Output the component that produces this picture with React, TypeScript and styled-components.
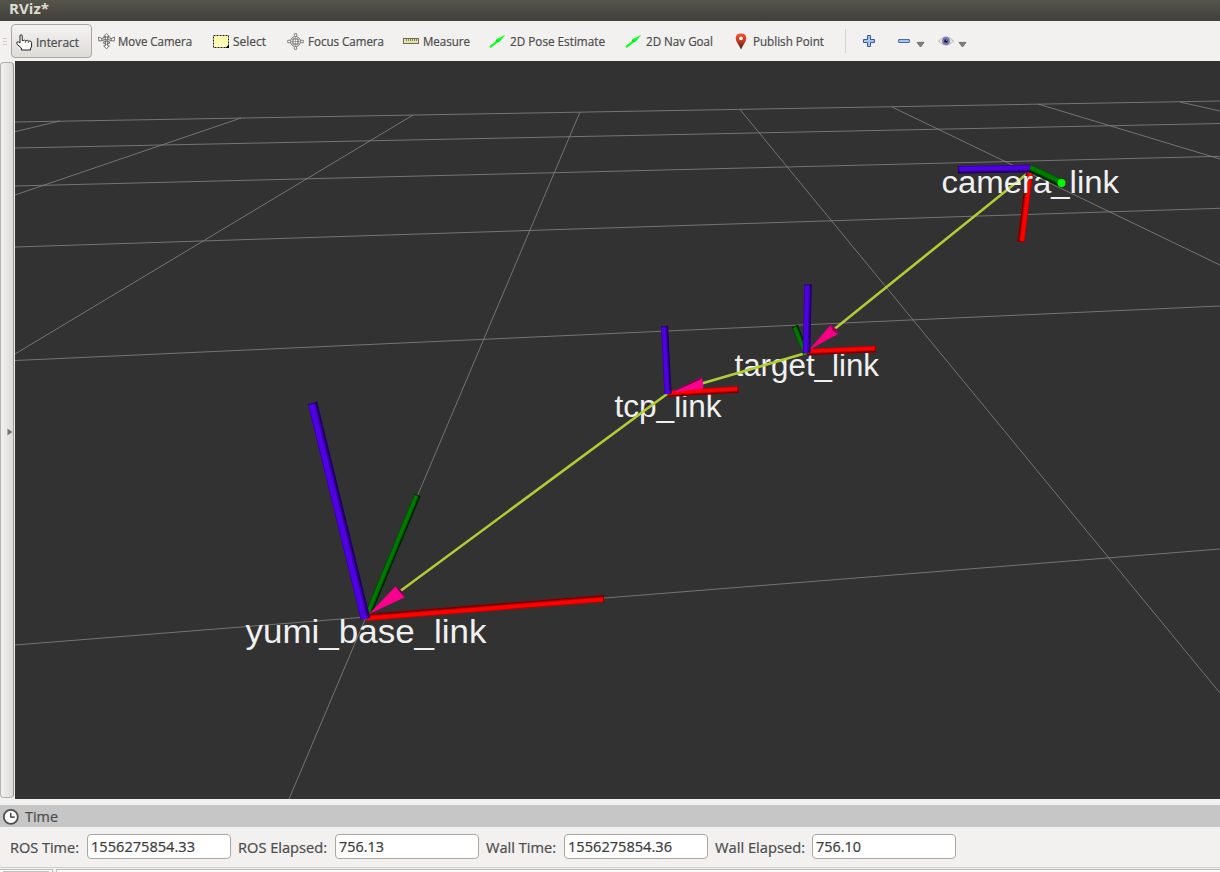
import React from "react";
import styled, { createGlobalStyle } from "styled-components";

const Global = createGlobalStyle`
  * { box-sizing: border-box; }
  body { margin: 0; background: #f2f1f0; }
`;

const Window = styled.div`
  width: 1220px;
  height: 872px;
  display: flex;
  flex-direction: column;
  overflow: hidden;
  background: #f2f1f0;
  color: #4c4c4c;
  font-family: "Open Sans", "Noto Sans", sans-serif;
`;

const TitleBar = styled.header`
  height: 21px;
  flex: none;
  padding-left: 9px;
  background: linear-gradient(#56554c, #403f3a);
  color: #dfdbd2;
`;

const Toolbar = styled.nav`
  height: 40px;
  flex: none;
  display: flex;
  align-items: flex-start;
  padding: 3px 0 0 3px;
`;

const Handle = styled.div`
  width: 4px;
  height: 8px;
  margin: 14px 4px 0 0;
  background: repeating-linear-gradient(#cfcdca 0 1px, transparent 1px 3px);
`;

const Tool = styled.button<{ $width: number; $lead: number; $gap: number; $active?: boolean }>`
  width: ${(p) => p.$width}px;
  height: 34px;
  flex: none;
  display: flex;
  align-items: center;
  gap: ${(p) => p.$gap}px;
  padding: ${(p) => (p.$active ? 2 : 0)}px 0 0 ${(p) => p.$lead}px;
  border: 1px solid ${(p) => (p.$active ? "#aaa7a2" : "transparent")};
  border-radius: 4px;
  background: ${(p) => (p.$active ? "linear-gradient(#f4f3f2, #dedcd9)" : "none")};
  color: inherit;
  font: inherit;
  svg { flex: none; }
`;

const Divider = styled.div`
  width: 1px;
  height: 24px;
  margin: 5px 16px 0 0;
  background: #d6d4d1;
`;

const IconTool = styled.button<{ $width: number; $gap?: number }>`
  width: ${(p) => p.$width}px;
  height: 34px;
  display: flex;
  align-items: center;
  gap: ${(p) => p.$gap ?? 0}px;
  padding: 0;
  border: 0;
  background: none;
`;

const Main = styled.main`
  height: 738px;
  flex: none;
  display: flex;
`;

const Splitter = styled.div`
  width: 14px;
  height: 736px;
  margin: 1px 1px 0 0;
  padding: 3px 0 0 5px;
  flex: none;
  display: flex;
  align-items: center;
  justify-content: center;
  border: 1px solid #b4b1ac;
  border-right-color: #96938f;
  border-radius: 4px;
  background: linear-gradient(90deg, #f3f2f1, #dddbd8);
`;

const Scene = styled.svg`
  display: block;
  background: #323232;
`;

const PanelTitle = styled.div`
  height: 22px;
  flex: none;
  margin-top: 6px;
  padding-left: 2px;
  display: flex;
  align-items: center;
  gap: 6px;
  background: #c6c6c6;
`;

const TimeRow = styled.div`
  height: 40px;
  flex: none;
  display: flex;
  padding: 7px 0 0 10px;
`;

const Label = styled.label<{ $width: number }>`
  width: ${(p) => p.$width}px;
  height: 27px;
  flex: none;
`;

const Field = styled.div`
  width: 144px;
  height: 25px;
  flex: none;
  margin-right: 7px;
  padding-left: 3px;
  border: 1px solid #aaa7a2;
  border-radius: 4px;
  background: #fff;
  color: #3c3c3c;
`;

const BottomEdge = styled.div`
  height: 5px;
  flex: none;
  display: flex;
  gap: 3px;
  padding-top: 1px;
  border-top: 1px solid #cfcdca;
`;

const Tab = styled.div<{ $grow?: boolean }>`
  flex: ${(p) => (p.$grow ? 1 : "0 0 53px")};
  padding: 1px 3px 0;
  border: solid #bfbcb8;
  border-width: 1px ${(p) => (p.$grow ? "0 0 1px" : "1px 0 0")};
  background: #fafafa;
  &::before {
    content: "";
    display: ${(p) => (p.$grow ? "none" : "block")};
    height: 2px;
    background: #c4c2be;
  }
`;

/** SVG text pinned to a fixed advance so that every label keeps its width. */
const TextSvg = styled.svg`
  display: block;
  overflow: visible;
  flex: none;
`;

type TProps = { children: string; w: number; size: number; h: number; base: number; bold?: boolean };
const FitText = ({ children, w, size, h, base, bold }: TProps) => (
  <TextSvg width={w} height={h}>
    <text
      x="0"
      y={base}
      textLength={w}
      lengthAdjust="spacingAndGlyphs"
      fontSize={size}
      fontWeight={bold ? 700 : 400}
      fill="currentColor"
      stroke="currentColor"
      strokeWidth={bold ? 0 : 0.22}
    >
      {children}
    </text>
  </TextSvg>
);

const HandIcon = () => (
  <svg width="17" height="17" viewBox="0 0 17 17" fill="#fff" stroke="#222" strokeLinejoin="round">
    <path d="M4 9V2Q4 .8 5.1.8T6.2 2V6.6H7.2Q8.6 5.6 9.4 6.7H10.2Q11.6 5.8 12.3 7H13.2Q15.6 6.8 15.6 8.6V13L14.6 14V16H5.4V14L1.2 10.4Q.2 9 1.2 8 2.4 7.2 4 9Z" />
    <path d="M9.4 7V8.8M12.3 7.2V9" strokeWidth=".7" />
  </svg>
);

const MoveIcon = () => (
  <svg width="17" height="17" viewBox="0 0 17 17" fill="#fff" stroke="#555" strokeWidth=".8" strokeLinejoin="round">
    <path d="M8.5.8 11.3 3.4H9.6V12.8H11.3L8.5 15.9 5.7 12.8H7.4V3.4H5.7Z" />
    <path d="M.6 4 .8 8 4.2 7.6 3.2 6.8Q8.5 10 13.8 6.8L12.8 7.6 16.2 8 16.4 4 15 4.8Q8.5 8.6 2 4.8Z" />
    <path d="M3.6 5.6Q8.5 2.4 13.4 5.6M5 9.8 8.5 7.2 12 9.8Q8.5 12.6 5 9.8Z" fill="none" />
  </svg>
);

const SelectIcon = () => (
  <svg width="17" height="15" viewBox="0 0 17 15">
    <rect x=".5" y="1.5" width="15" height="12" fill="#fbfbb5" stroke="#222" strokeDasharray="2 1" />
    <path d="M16 10.5v3.5h-3.5z" fill="#000" />
  </svg>
);

const FocusIcon = () => (
  <svg width="17" height="17" viewBox="0 0 17 17" fill="none" stroke="#777" strokeWidth=".9">
    <path d="M7.3 4V.7h2.4V4M7.3 13v3.3h2.4V13M4 7.3H.7v2.4H4M13 7.3h3.3v2.4H13" fill="#fff" />
    <circle cx="8.5" cy="8.5" r="5" fill="#fff" />
    <circle cx="8.5" cy="8.5" r="3" />
    <path d="M8.5 3v11M3 8.5h11M6.2 4v9M10.8 4v9M4 6.2h9M4 10.8h9" strokeWidth=".6" />
  </svg>
);

const RulerIcon = () => (
  <svg width="17" height="8" viewBox="0 0 17 8">
    <rect x=".5" y="1.5" width="15" height="5" fill="#e4e2a5" stroke="#6d6b59" />
    <path d="M3.5 2v2M5.5 2v2M7.5 2v2M9.5 2v2M11.5 2v2M13.5 2v2" stroke="#6d6b59" strokeWidth=".8" />
  </svg>
);

const ArrowIcon = () => (
  <svg width="17" height="15" viewBox="0 0 17 15">
    <path d="M.3 12.2 6.8 7.2 7 5.6 16.3.8 11 7.4 8.7 8.6 1.6 14Z" fill="#0eff22" />
    <path d="M7.8 6.4 9.2 7.8" stroke="#0a8a1c" strokeWidth="1" />
  </svg>
);

const PinIcon = () => (
  <svg width="12" height="17" viewBox="0 0 12 17">
    <defs>
      <linearGradient id="pin" x2="0" y2="1">
        <stop offset="0" stopColor="#ff4a2b" />
        <stop offset=".45" stopColor="#c93b22" />
        <stop offset="1" stopColor="#392718" />
      </linearGradient>
    </defs>
    <path d="M6 16.5Q4.6 13.5 2.7 10.4.7 7.4.7 5.4.7.6 6 .6T11.3 5.4Q11.3 7.4 9.3 10.4 7.4 13.5 6 16.5Z" fill="url(#pin)" />
    <circle cx="6" cy="5.3" r="1.9" fill="#fff" />
  </svg>
);

const PlusIcon = () => (
  <svg width="14" height="14" viewBox="0 0 14 14">
    <path d="M5.5 1.5h3v4h4v3h-4v4h-3v-4h-4v-3h4z" fill="#a5c4ea" stroke="#3558a5" strokeLinejoin="round" />
  </svg>
);

const MinusIcon = () => (
  <svg width="14" height="14" viewBox="0 0 14 14">
    <rect x="1.5" y="5.5" width="11" height="3" rx=".5" fill="#a5c4ea" stroke="#4866ad" />
  </svg>
);

const EyeIcon = () => (
  <svg width="17" height="14" viewBox="0 0 17 14">
    <path d="M.5 7.2Q8-2 15.6 7.2 8.2 15.4.5 7.2Z" fill="#e2e2e0" stroke="#b0b0ad" strokeWidth=".8" />
    <circle cx="8" cy="7" r="3.9" fill="#7774b6" />
    <circle cx="8" cy="7" r="1.8" fill="#111129" />
    <circle cx="8.7" cy="6.2" r=".6" fill="#dcdcff" />
  </svg>
);

const CaretIcon = () => (
  <svg width="9" height="15" viewBox="0 0 9 15">
    <path d="M1 8.4h7L4.5 13Z" fill="#80807d" stroke="#5e5e5b" strokeWidth=".8" />
  </svg>
);

const ClockIcon = () => (
  <svg width="17" height="17" viewBox="0 0 17 17" fill="none">
    <circle cx="8.8" cy="8.9" r="7" fill="#fff" stroke="#505050" strokeWidth="1.8" />
    <path d="M8.8 4.8v4.3h4" stroke="#222" strokeWidth="1.2" />
  </svg>
);

const tools = [
  { label: "Interact", icon: <HandIcon />, width: 81, text: 43, lead: 4, gap: 3, active: true },
  { label: "Move Camera", icon: <MoveIcon />, width: 115, text: 74, lead: 5, gap: 3 },
  { label: "Select", icon: <SelectIcon />, width: 75, text: 33, lead: 5, gap: 3 },
  { label: "Focus Camera", icon: <FocusIcon />, width: 115, text: 76, lead: 4, gap: 4 },
  { label: "Measure", icon: <RulerIcon />, width: 87, text: 47, lead: 5, gap: 3 },
  { label: "2D Pose Estimate", icon: <ArrowIcon />, width: 136, text: 95, lead: 4, gap: 4 },
  { label: "2D Nav Goal", icon: <ArrowIcon />, width: 109, text: 67, lead: 4, gap: 4 },
  { label: "Publish Point", icon: <PinIcon />, width: 116, text: 71, lead: 5, gap: 6 },
];

const times = [
  { label: "ROS Time:", width: 77, text: 69, value: "1556275854.33", valueWidth: 104 },
  { label: "ROS Elapsed:", width: 97, text: 89, value: "756.13", valueWidth: 45 },
  { label: "Wall Time:", width: 78, text: 70, value: "1556275854.36", valueWidth: 104 },
  { label: "Wall Elapsed:", width: 97, text: 90, value: "756.10", valueWidth: 45 },
];

const gridLines = [
  [15, 122, 1220, 101], [15, 148, 1220, 123.5], [15, 186, 1220, 156.3],
  [15, 247, 1220, 208.3], [15, 360.5, 1220, 306], [15, 645, 1220, 549],
  [60, 121, 15, 131.7], [241, 118, 15, 195], [413, 115, 15, 354],
  [580, 112, 289, 799], [740, 109.5, 1220, 693], [892, 107, 1220, 265],
  [1038, 104, 1220, 159], [1180, 102, 1220, 111],
];

type Pt = [number, number];

/** Shaded cylinder between two points; `side` selects the shadowed edge. */
const Rod = ({ from, to, w, fill, dark, side }: { from: Pt; to: Pt; w: number; fill: string; dark: string; side: number }) => {
  const len = Math.hypot(to[0] - from[0], to[1] - from[1]);
  const angle = (Math.atan2(to[1] - from[1], to[0] - from[0]) * 180) / Math.PI;
  const edge = w * 0.2;
  return (
    <g transform={`translate(${from[0]} ${from[1]}) rotate(${angle})`}>
      <rect y={-w / 2} width={len} height={w} fill={fill} />
      <rect y={side > 0 ? w / 2 - edge * 1.8 : -w / 2} width={len} height={edge * 1.8} fill={dark} opacity=".45" />
      <rect y={side > 0 ? w / 2 - edge : -w / 2} width={len} height={edge} fill={dark} />
      <rect y={side > 0 ? -w / 2 : w / 2 - 0.8} width={len} height={0.8} fill={dark} opacity=".5" />
      <rect x={len - 1.2} y={-w / 2} width={1.2} height={w} fill={dark} opacity=".7" />
    </g>
  );
};

const Frame = ({ x, y, w, size, children }: { x: number; y: number; w: number; size: number; children: string }) => (
  <text x={x} y={y} textLength={w} lengthAdjust="spacingAndGlyphs" fontSize={size} fill="#f0f0f0" fontFamily='"Liberation Sans", Arial, sans-serif'>
    {children}
  </text>
);

const blue = { fill: "#5000e4", dark: "#1d0059" };
const red = { fill: "#ff0000", dark: "#6c0000" };
const green = { fill: "#007a00", dark: "#001d00" };

const Viewport = () => (
  <Scene width="1205" height="738" viewBox="15 61 1205 738">
    <g stroke="#858585" strokeWidth=".8">
      {gridLines.map(([x1, y1, x2, y2], i) => (
        <line key={i} x1={x1} y1={y1} x2={x2} y2={y2} />
      ))}
    </g>
    <Frame x={245.5} y={643} w={241} size={34}>yumi_base_link</Frame>
    <Frame x={614.5} y={416.5} w={107} size={31}>tcp_link</Frame>
    <Frame x={734.5} y={375.5} w={144.5} size={31}>target_link</Frame>

    <g stroke="#b1cc35" strokeWidth="2.6">
      <line x1="1028" y1="173" x2="832" y2="331" />
      <line x1="806" y1="353" x2="700" y2="384" />
      <line x1="667" y1="394" x2="399" y2="592" />
    </g>

    <Rod from={[369, 612]} to={[417.5, 495]} w={6.5} {...green} side={1} />
    <Rod from={[366, 617.5]} to={[604, 598.5]} w={7} {...red} side={-1} />
    <Rod from={[365.5, 619]} to={[312.5, 403]} w={9.5} {...blue} side={1} />
    <path d="M369 614 395.5 586.5Q403 591 404.5 597.5Z" fill="#fb008f" />
    <path d="M395.5 586.5Q403 590 404.5 597.5L400 592Z" fill="#6d0040" />

    <Rod from={[668, 393.5]} to={[738.5, 389.5]} w={6.5} {...red} side={1} />
    <path d="M672 392.5 701 377Q704 383 703 388.5Z" fill="#fb008f" />
    <path d="M672 392.5 701 377 700.5 379.5Z" fill="#6d0040" />
    <Rod from={[668, 394]} to={[664.5, 326]} w={7} {...blue} side={1} />

    <Rod from={[806, 354]} to={[795, 326]} w={6} {...green} side={1} />
    <Rod from={[807, 352]} to={[876, 349]} w={6.5} {...red} side={1} />
    <path d="M809 350 830.5 325Q837 328 838 334Z" fill="#f50085" />
    <path d="M830.5 325Q837 328 838 334L833 331Z" fill="#92004e" />
    <Rod from={[806.5, 353]} to={[808, 284.5]} w={7.5} {...blue} side={1} />

    <Rod from={[1029.5, 173]} to={[1021, 242]} w={7} {...red} side={1} />
    <Frame x={941.5} y={192.5} w={177.5} size={31}>camera_link</Frame>
    <Rod from={[1030.5, 168.5]} to={[958, 169.8]} w={7.5} {...blue} side={-1} />
    <Rod from={[1030, 168]} to={[1061, 183]} w={7.5} {...green} side={1} />
    <circle cx="1061.5" cy="183" r="4" fill="#00fb00" />
  </Scene>
);

const App = () => (
  <Window>
    <Global />
    <TitleBar>
      <FitText w={40} size={14} h={20} base={14} bold>RViz*</FitText>
    </TitleBar>
    <Toolbar>
      <Handle />
      {tools.map((t) => (
        <Tool key={t.label} $width={t.width} $lead={t.lead} $gap={t.gap} $active={t.active}>
          {t.icon}
          <FitText w={t.text} size={12} h={18} base={13.5}>{t.label}</FitText>
        </Tool>
      ))}
      <Divider />
      <IconTool $width={35}><PlusIcon /></IconTool>
      <IconTool $width={41} $gap={5}><MinusIcon /><CaretIcon /></IconTool>
      <IconTool $width={31} $gap={3}><EyeIcon /><CaretIcon /></IconTool>
    </Toolbar>
    <Main>
      <Splitter>
        <svg width="6" height="8" viewBox="0 0 6 8"><path d="M.5.5V7.5L5.5 4Z" fill="#777572" /></svg>
      </Splitter>
      <Viewport />
    </Main>
    <PanelTitle>
      <ClockIcon />
      <FitText w={33} size={14} h={20} base={15.5}>Time</FitText>
    </PanelTitle>
    <TimeRow>
      {times.map((t) => (
        <React.Fragment key={t.label}>
          <Label $width={t.width}><FitText w={t.text} size={14} h={27} base={19}>{t.label}</FitText></Label>
          <Field><FitText w={t.valueWidth} size={14} h={23} base={17}>{t.value}</FitText></Field>
        </React.Fragment>
      ))}
    </TimeRow>
    <BottomEdge>
      <Tab />
      <Tab $grow />
    </BottomEdge>
  </Window>
);

export default App;
